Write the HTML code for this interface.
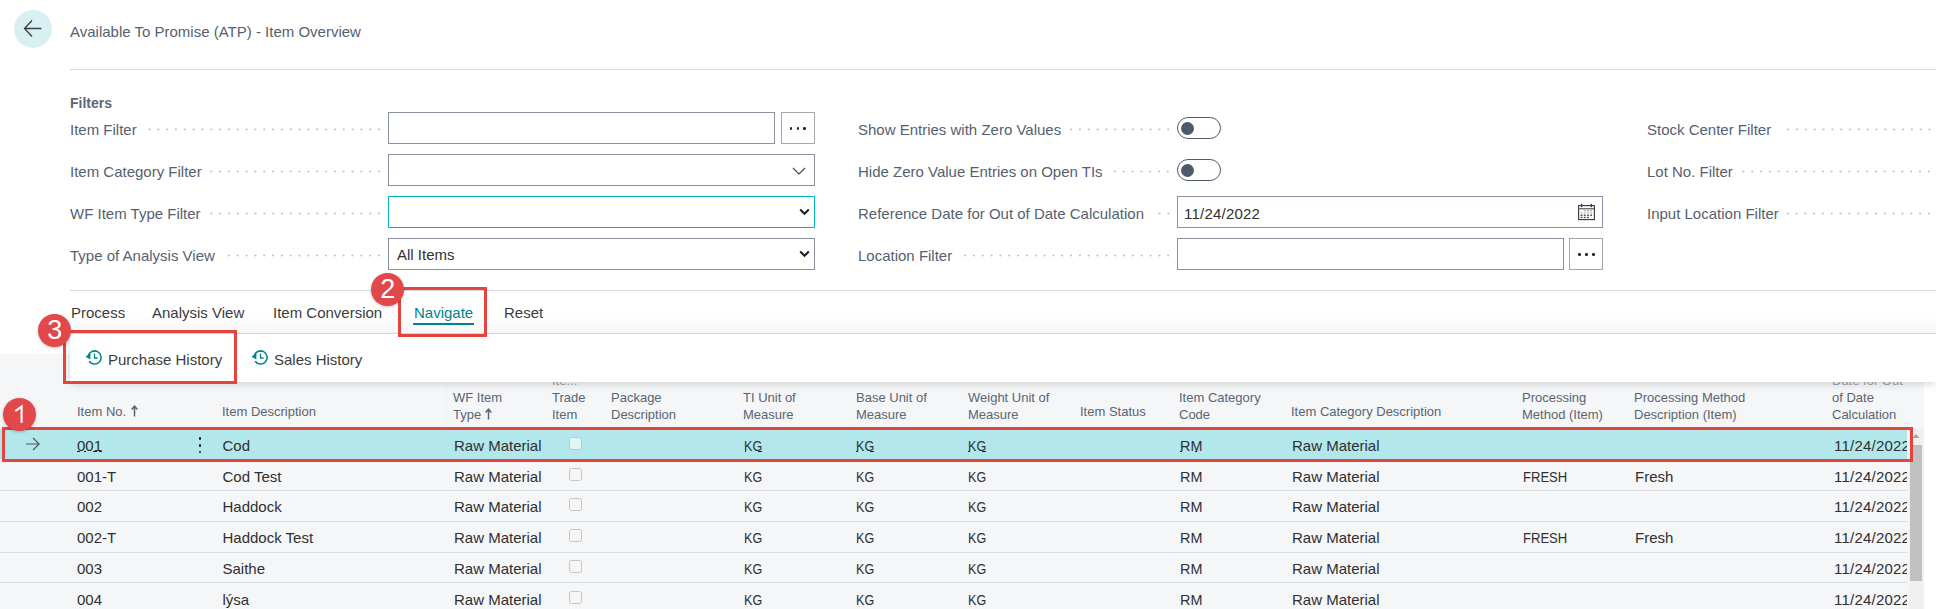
<!DOCTYPE html>
<html><head><meta charset="utf-8"><title>ATP Item Overview</title>
<style>
html,body{margin:0;padding:0;}
body{width:1936px;height:609px;overflow:hidden;position:relative;background:#fff;font-family:"Liberation Sans",sans-serif;}
.a{position:absolute;}
.t{position:absolute;white-space:nowrap;font-family:"Liberation Sans",sans-serif;}
</style></head><body>
<div class="a" style="left:14px;top:10px;width:38px;height:38px;border-radius:50%;background:#d9f0f3"></div>
<svg class="a" style="left:22px;top:18px" width="22" height="22" viewBox="0 0 22 22"><path d="M10 2.5 L2.5 10.5 L10 18.5 M2.5 10.5 L19.5 10.5" fill="none" stroke="#3b3f44" stroke-width="1.3"/></svg>
<div class="t" style="left:70px;top:24px;font-size:15px;line-height:15px;color:#56616f;font-weight:normal;">Available To Promise (ATP) - Item Overview</div>
<div class="a" style="left:70px;top:69px;width:1866px;height:1px;background:#d5d9de"></div>
<div class="t" style="left:70px;top:96px;font-size:14px;line-height:14px;color:#5d6775;font-weight:bold;">Filters</div>
<div class="t" style="left:70px;top:122px;font-size:15px;line-height:15px;color:#56616f;font-weight:normal;">Item Filter</div>
<svg class="a" style="left:144.1875px;top:127.0px" width="238" height="5" fill="#bfc3ca"><circle cx="235.06" cy="2.5" r="1.1"/><circle cx="226.23" cy="2.5" r="1.1"/><circle cx="217.40" cy="2.5" r="1.1"/><circle cx="208.57" cy="2.5" r="1.1"/><circle cx="199.74" cy="2.5" r="1.1"/><circle cx="190.91" cy="2.5" r="1.1"/><circle cx="182.08" cy="2.5" r="1.1"/><circle cx="173.25" cy="2.5" r="1.1"/><circle cx="164.42" cy="2.5" r="1.1"/><circle cx="155.59" cy="2.5" r="1.1"/><circle cx="146.76" cy="2.5" r="1.1"/><circle cx="137.93" cy="2.5" r="1.1"/><circle cx="129.10" cy="2.5" r="1.1"/><circle cx="120.27" cy="2.5" r="1.1"/><circle cx="111.44" cy="2.5" r="1.1"/><circle cx="102.61" cy="2.5" r="1.1"/><circle cx="93.78" cy="2.5" r="1.1"/><circle cx="84.95" cy="2.5" r="1.1"/><circle cx="76.12" cy="2.5" r="1.1"/><circle cx="67.29" cy="2.5" r="1.1"/><circle cx="58.46" cy="2.5" r="1.1"/><circle cx="49.63" cy="2.5" r="1.1"/><circle cx="40.80" cy="2.5" r="1.1"/><circle cx="31.97" cy="2.5" r="1.1"/><circle cx="23.14" cy="2.5" r="1.1"/><circle cx="14.31" cy="2.5" r="1.1"/><circle cx="5.48" cy="2.5" r="1.1"/></svg>
<div class="t" style="left:70px;top:164px;font-size:15px;line-height:15px;color:#56616f;font-weight:normal;">Item Category Filter</div>
<svg class="a" style="left:209.234375px;top:169.0px" width="173" height="5" fill="#bfc3ca"><circle cx="170.02" cy="2.5" r="1.1"/><circle cx="161.19" cy="2.5" r="1.1"/><circle cx="152.36" cy="2.5" r="1.1"/><circle cx="143.53" cy="2.5" r="1.1"/><circle cx="134.70" cy="2.5" r="1.1"/><circle cx="125.87" cy="2.5" r="1.1"/><circle cx="117.04" cy="2.5" r="1.1"/><circle cx="108.21" cy="2.5" r="1.1"/><circle cx="99.38" cy="2.5" r="1.1"/><circle cx="90.55" cy="2.5" r="1.1"/><circle cx="81.72" cy="2.5" r="1.1"/><circle cx="72.89" cy="2.5" r="1.1"/><circle cx="64.06" cy="2.5" r="1.1"/><circle cx="55.23" cy="2.5" r="1.1"/><circle cx="46.40" cy="2.5" r="1.1"/><circle cx="37.57" cy="2.5" r="1.1"/><circle cx="28.74" cy="2.5" r="1.1"/><circle cx="19.91" cy="2.5" r="1.1"/><circle cx="11.08" cy="2.5" r="1.1"/><circle cx="2.25" cy="2.5" r="1.1"/></svg>
<div class="t" style="left:70px;top:206px;font-size:15px;line-height:15px;color:#56616f;font-weight:normal;">WF Item Type Filter</div>
<svg class="a" style="left:208.09375px;top:211.0px" width="174" height="5" fill="#bfc3ca"><circle cx="171.16" cy="2.5" r="1.1"/><circle cx="162.33" cy="2.5" r="1.1"/><circle cx="153.50" cy="2.5" r="1.1"/><circle cx="144.67" cy="2.5" r="1.1"/><circle cx="135.84" cy="2.5" r="1.1"/><circle cx="127.01" cy="2.5" r="1.1"/><circle cx="118.18" cy="2.5" r="1.1"/><circle cx="109.35" cy="2.5" r="1.1"/><circle cx="100.52" cy="2.5" r="1.1"/><circle cx="91.69" cy="2.5" r="1.1"/><circle cx="82.86" cy="2.5" r="1.1"/><circle cx="74.03" cy="2.5" r="1.1"/><circle cx="65.20" cy="2.5" r="1.1"/><circle cx="56.37" cy="2.5" r="1.1"/><circle cx="47.54" cy="2.5" r="1.1"/><circle cx="38.71" cy="2.5" r="1.1"/><circle cx="29.88" cy="2.5" r="1.1"/><circle cx="21.05" cy="2.5" r="1.1"/><circle cx="12.22" cy="2.5" r="1.1"/><circle cx="3.39" cy="2.5" r="1.1"/></svg>
<div class="t" style="left:70px;top:248px;font-size:15px;line-height:15px;color:#56616f;font-weight:normal;">Type of Analysis View</div>
<svg class="a" style="left:222.296875px;top:253.0px" width="159" height="5" fill="#bfc3ca"><circle cx="156.95" cy="2.5" r="1.1"/><circle cx="148.12" cy="2.5" r="1.1"/><circle cx="139.29" cy="2.5" r="1.1"/><circle cx="130.46" cy="2.5" r="1.1"/><circle cx="121.63" cy="2.5" r="1.1"/><circle cx="112.80" cy="2.5" r="1.1"/><circle cx="103.97" cy="2.5" r="1.1"/><circle cx="95.14" cy="2.5" r="1.1"/><circle cx="86.31" cy="2.5" r="1.1"/><circle cx="77.48" cy="2.5" r="1.1"/><circle cx="68.65" cy="2.5" r="1.1"/><circle cx="59.82" cy="2.5" r="1.1"/><circle cx="50.99" cy="2.5" r="1.1"/><circle cx="42.16" cy="2.5" r="1.1"/><circle cx="33.33" cy="2.5" r="1.1"/><circle cx="24.50" cy="2.5" r="1.1"/><circle cx="15.67" cy="2.5" r="1.1"/><circle cx="6.84" cy="2.5" r="1.1"/></svg>
<div class="a" style="left:388px;top:112px;width:387px;height:32px;box-sizing:border-box;border:1px solid #8a939f;background:#fff"></div>
<div class="a" style="left:781px;top:112px;width:34px;height:32px;box-sizing:border-box;border:1px solid #a6a6a6;background:#fff"></div>
<div class="a" style="left:789.8px;top:127.3px;width:2.7px;height:2.7px;border-radius:50%;background:#222"></div>
<div class="a" style="left:796.5999999999999px;top:127.3px;width:2.7px;height:2.7px;border-radius:50%;background:#222"></div>
<div class="a" style="left:803.4px;top:127.3px;width:2.7px;height:2.7px;border-radius:50%;background:#222"></div>
<div class="a" style="left:388px;top:154px;width:427px;height:32px;box-sizing:border-box;border:1px solid #8a939f;background:#fff"></div>
<svg class="a" style="left:792px;top:166px" width="14" height="10" viewBox="0 0 14 10"><path d="M1 2 L7 8 L13 2" fill="none" stroke="#444" stroke-width="1.1"/></svg>
<div class="a" style="left:388px;top:196px;width:427px;height:32px;box-sizing:border-box;border:1px solid #00b7c3;background:#fff"></div>
<svg class="a" style="left:799px;top:208px" width="11" height="8" viewBox="0 0 11 8"><path d="M1.2 1.5 L5.5 5.8 L9.8 1.5" fill="none" stroke="#1e1e1e" stroke-width="2"/></svg>
<div class="a" style="left:388px;top:238px;width:427px;height:32px;box-sizing:border-box;border:1px solid #8a939f;background:#fff"></div>
<svg class="a" style="left:799px;top:250px" width="11" height="8" viewBox="0 0 11 8"><path d="M1.2 1.5 L5.5 5.8 L9.8 1.5" fill="none" stroke="#1e1e1e" stroke-width="2"/></svg>
<div class="t" style="left:397px;top:247px;font-size:15px;line-height:15px;color:#303030;font-weight:normal;">All Items</div>
<div class="t" style="left:858px;top:122px;font-size:15px;line-height:15px;color:#56616f;font-weight:normal;">Show Entries with Zero Values</div>
<svg class="a" style="left:1068.65625px;top:127.0px" width="102" height="5" fill="#bfc3ca"><circle cx="99.24" cy="2.5" r="1.1"/><circle cx="90.41" cy="2.5" r="1.1"/><circle cx="81.58" cy="2.5" r="1.1"/><circle cx="72.75" cy="2.5" r="1.1"/><circle cx="63.92" cy="2.5" r="1.1"/><circle cx="55.09" cy="2.5" r="1.1"/><circle cx="46.26" cy="2.5" r="1.1"/><circle cx="37.43" cy="2.5" r="1.1"/><circle cx="28.60" cy="2.5" r="1.1"/><circle cx="19.77" cy="2.5" r="1.1"/><circle cx="10.94" cy="2.5" r="1.1"/><circle cx="2.11" cy="2.5" r="1.1"/></svg>
<div class="t" style="left:858px;top:164px;font-size:15px;line-height:15px;color:#56616f;font-weight:normal;">Hide Zero Value Entries on Open TIs</div>
<svg class="a" style="left:1110.109375px;top:169.0px" width="60" height="5" fill="#bfc3ca"><circle cx="57.79" cy="2.5" r="1.1"/><circle cx="48.96" cy="2.5" r="1.1"/><circle cx="40.13" cy="2.5" r="1.1"/><circle cx="31.30" cy="2.5" r="1.1"/><circle cx="22.47" cy="2.5" r="1.1"/><circle cx="13.64" cy="2.5" r="1.1"/><circle cx="4.81" cy="2.5" r="1.1"/></svg>
<div class="t" style="left:858px;top:206px;font-size:15px;line-height:15px;color:#56616f;font-weight:normal;">Reference Date for Out of Date Calculation</div>
<svg class="a" style="left:1151.546875px;top:211.0px" width="19" height="5" fill="#bfc3ca"><circle cx="16.35" cy="2.5" r="1.1"/><circle cx="7.52" cy="2.5" r="1.1"/></svg>
<div class="t" style="left:858px;top:248px;font-size:15px;line-height:15px;color:#56616f;font-weight:normal;">Location Filter</div>
<svg class="a" style="left:959.71875px;top:253.0px" width="211" height="5" fill="#bfc3ca"><circle cx="208.18" cy="2.5" r="1.1"/><circle cx="199.35" cy="2.5" r="1.1"/><circle cx="190.52" cy="2.5" r="1.1"/><circle cx="181.69" cy="2.5" r="1.1"/><circle cx="172.86" cy="2.5" r="1.1"/><circle cx="164.03" cy="2.5" r="1.1"/><circle cx="155.20" cy="2.5" r="1.1"/><circle cx="146.37" cy="2.5" r="1.1"/><circle cx="137.54" cy="2.5" r="1.1"/><circle cx="128.71" cy="2.5" r="1.1"/><circle cx="119.88" cy="2.5" r="1.1"/><circle cx="111.05" cy="2.5" r="1.1"/><circle cx="102.22" cy="2.5" r="1.1"/><circle cx="93.39" cy="2.5" r="1.1"/><circle cx="84.56" cy="2.5" r="1.1"/><circle cx="75.73" cy="2.5" r="1.1"/><circle cx="66.90" cy="2.5" r="1.1"/><circle cx="58.07" cy="2.5" r="1.1"/><circle cx="49.24" cy="2.5" r="1.1"/><circle cx="40.41" cy="2.5" r="1.1"/><circle cx="31.58" cy="2.5" r="1.1"/><circle cx="22.75" cy="2.5" r="1.1"/><circle cx="13.92" cy="2.5" r="1.1"/><circle cx="5.09" cy="2.5" r="1.1"/></svg>
<div class="a" style="left:1177px;top:117px;width:44px;height:22px;box-sizing:border-box;border:1px solid #505c6d;border-radius:11px;background:#fff"></div>
<div class="a" style="left:1181px;top:122px;width:13px;height:13px;border-radius:50%;background:#4e5969"></div>
<div class="a" style="left:1177px;top:159px;width:44px;height:22px;box-sizing:border-box;border:1px solid #505c6d;border-radius:11px;background:#fff"></div>
<div class="a" style="left:1181px;top:164px;width:13px;height:13px;border-radius:50%;background:#4e5969"></div>
<div class="a" style="left:1177px;top:196px;width:426px;height:32px;box-sizing:border-box;border:1px solid #8a939f;background:#fff"></div>
<div class="t" style="left:1184px;top:206px;font-size:15px;line-height:15px;color:#303030;font-weight:normal;letter-spacing:0.22px">11/24/2022</div>
<svg class="a" style="left:1577px;top:203px" width="19" height="18" viewBox="0 0 19 18"><rect x="1.6" y="2.6" width="15.8" height="14" fill="none" stroke="#333" stroke-width="1.1"/><line x1="1.6" y1="5.7" x2="17.4" y2="5.7" stroke="#666" stroke-width="1.3"/><line x1="4.6" y1="0.8" x2="4.6" y2="4.2" stroke="#333" stroke-width="1.2"/><line x1="14.3" y1="0.8" x2="14.3" y2="4.2" stroke="#333" stroke-width="1.2"/><rect x="3.6" y="9.3" width="1.9" height="1.2" fill="#aaa"/><rect x="3.6" y="11.6" width="1.9" height="1.3" fill="#444"/><rect x="3.6" y="13.8" width="1.9" height="1.3" fill="#444"/><rect x="6.8" y="6.9" width="1.9" height="1.3" fill="#aaa"/><rect x="6.8" y="9.3" width="1.9" height="1.2" fill="#aaa"/><rect x="6.8" y="11.6" width="1.9" height="1.3" fill="#444"/><rect x="6.8" y="13.8" width="1.9" height="1.3" fill="#444"/><rect x="10.0" y="6.9" width="1.9" height="1.3" fill="#aaa"/><rect x="10.0" y="9.3" width="1.9" height="1.2" fill="#aaa"/><rect x="10.0" y="11.6" width="1.9" height="1.3" fill="#444"/><rect x="10.0" y="13.8" width="1.9" height="1.3" fill="#444"/><rect x="13.2" y="6.9" width="1.9" height="1.3" fill="#aaa"/><rect x="13.2" y="9.3" width="1.9" height="1.2" fill="#aaa"/><rect x="13.2" y="11.6" width="1.9" height="1.3" fill="#444"/></svg>
<div class="a" style="left:1177px;top:238px;width:387px;height:32px;box-sizing:border-box;border:1px solid #8a939f;background:#fff"></div>
<div class="a" style="left:1569px;top:238px;width:34px;height:32px;box-sizing:border-box;border:1px solid #a6a6a6;background:#fff"></div>
<div class="a" style="left:1578.3px;top:253.3px;width:2.7px;height:2.7px;border-radius:50%;background:#222"></div>
<div class="a" style="left:1585.1px;top:253.3px;width:2.7px;height:2.7px;border-radius:50%;background:#222"></div>
<div class="a" style="left:1591.8999999999999px;top:253.3px;width:2.7px;height:2.7px;border-radius:50%;background:#222"></div>
<div class="t" style="left:1647px;top:122px;font-size:15px;line-height:15px;color:#56616f;font-weight:normal;">Stock Center Filter</div>
<svg class="a" style="left:1778.71875px;top:127.0px" width="153" height="5" fill="#bfc3ca"><circle cx="150.48" cy="2.5" r="1.1"/><circle cx="141.65" cy="2.5" r="1.1"/><circle cx="132.82" cy="2.5" r="1.1"/><circle cx="123.99" cy="2.5" r="1.1"/><circle cx="115.16" cy="2.5" r="1.1"/><circle cx="106.33" cy="2.5" r="1.1"/><circle cx="97.50" cy="2.5" r="1.1"/><circle cx="88.67" cy="2.5" r="1.1"/><circle cx="79.84" cy="2.5" r="1.1"/><circle cx="71.01" cy="2.5" r="1.1"/><circle cx="62.18" cy="2.5" r="1.1"/><circle cx="53.35" cy="2.5" r="1.1"/><circle cx="44.52" cy="2.5" r="1.1"/><circle cx="35.69" cy="2.5" r="1.1"/><circle cx="26.86" cy="2.5" r="1.1"/><circle cx="18.03" cy="2.5" r="1.1"/><circle cx="9.20" cy="2.5" r="1.1"/></svg>
<div class="t" style="left:1647px;top:164px;font-size:15px;line-height:15px;color:#56616f;font-weight:normal;">Lot No. Filter</div>
<svg class="a" style="left:1740.375px;top:169.0px" width="191" height="5" fill="#bfc3ca"><circle cx="188.83" cy="2.5" r="1.1"/><circle cx="180.00" cy="2.5" r="1.1"/><circle cx="171.17" cy="2.5" r="1.1"/><circle cx="162.34" cy="2.5" r="1.1"/><circle cx="153.51" cy="2.5" r="1.1"/><circle cx="144.68" cy="2.5" r="1.1"/><circle cx="135.85" cy="2.5" r="1.1"/><circle cx="127.02" cy="2.5" r="1.1"/><circle cx="118.19" cy="2.5" r="1.1"/><circle cx="109.36" cy="2.5" r="1.1"/><circle cx="100.53" cy="2.5" r="1.1"/><circle cx="91.70" cy="2.5" r="1.1"/><circle cx="82.87" cy="2.5" r="1.1"/><circle cx="74.04" cy="2.5" r="1.1"/><circle cx="65.21" cy="2.5" r="1.1"/><circle cx="56.38" cy="2.5" r="1.1"/><circle cx="47.55" cy="2.5" r="1.1"/><circle cx="38.72" cy="2.5" r="1.1"/><circle cx="29.89" cy="2.5" r="1.1"/><circle cx="21.06" cy="2.5" r="1.1"/><circle cx="12.23" cy="2.5" r="1.1"/><circle cx="3.40" cy="2.5" r="1.1"/></svg>
<div class="t" style="left:1647px;top:206px;font-size:15px;line-height:15px;color:#56616f;font-weight:normal;">Input Location Filter</div>
<svg class="a" style="left:1786.265625px;top:211.0px" width="145" height="5" fill="#bfc3ca"><circle cx="142.93" cy="2.5" r="1.1"/><circle cx="134.10" cy="2.5" r="1.1"/><circle cx="125.27" cy="2.5" r="1.1"/><circle cx="116.44" cy="2.5" r="1.1"/><circle cx="107.61" cy="2.5" r="1.1"/><circle cx="98.78" cy="2.5" r="1.1"/><circle cx="89.95" cy="2.5" r="1.1"/><circle cx="81.12" cy="2.5" r="1.1"/><circle cx="72.29" cy="2.5" r="1.1"/><circle cx="63.46" cy="2.5" r="1.1"/><circle cx="54.63" cy="2.5" r="1.1"/><circle cx="45.80" cy="2.5" r="1.1"/><circle cx="36.97" cy="2.5" r="1.1"/><circle cx="28.14" cy="2.5" r="1.1"/><circle cx="19.31" cy="2.5" r="1.1"/><circle cx="10.48" cy="2.5" r="1.1"/><circle cx="1.65" cy="2.5" r="1.1"/></svg>
<div class="a" style="left:70px;top:290px;width:1866px;height:1px;background:#d5d9de"></div>
<div class="a" style="left:70px;top:316px;width:1866px;height:17px;background:linear-gradient(rgba(240,241,243,0),rgba(240,241,243,0.6))"></div>
<div class="a" style="left:70px;top:333px;width:1866px;height:1px;background:#d7dade"></div>
<div class="t" style="left:71px;top:305px;font-size:15px;line-height:15px;color:#3c3c3c;font-weight:normal;">Process</div>
<div class="t" style="left:152px;top:305px;font-size:15px;line-height:15px;color:#3c3c3c;font-weight:normal;">Analysis View</div>
<div class="t" style="left:273px;top:305px;font-size:15px;line-height:15px;color:#3c3c3c;font-weight:normal;">Item Conversion</div>
<div class="t" style="left:504px;top:305px;font-size:15px;line-height:15px;color:#3c3c3c;font-weight:normal;">Reset</div>
<div class="t" style="left:414px;top:305px;font-size:15px;line-height:15px;color:#008489;font-weight:normal;">Navigate</div>
<div class="a" style="left:413px;top:323px;width:61px;height:2px;background:#00838a"></div>
<div class="a" style="left:0px;top:354px;width:1924px;height:255px;background:#f5f6f8"></div>
<div class="a" style="left:446px;top:383px;width:1px;height:46px;background:#eef0f2"></div>
<div class="a" style="left:1924px;top:354px;width:12px;height:255px;background:#fff"></div>
<div class="t" style="left:77px;top:405px;font-size:13px;line-height:13px;color:#5a6473;font-weight:normal;">Item No.</div>
<svg class="a" style="left:131px;top:404.5px" width="7" height="12" viewBox="0 0 7 12"><path d="M3.5 1.5 L3.5 11.5 M0.6 4.4 L3.5 1.2 L6.4 4.4" fill="none" stroke="#5a6473" stroke-width="1.5"/></svg>
<div class="t" style="left:222px;top:405px;font-size:13px;line-height:13px;color:#5a6473;font-weight:normal;">Item Description</div>
<div class="t" style="left:453px;top:391px;font-size:13px;line-height:13px;color:#5a6473;font-weight:normal;">WF Item</div>
<div class="t" style="left:453px;top:408px;font-size:13px;line-height:13px;color:#5a6473;font-weight:normal;">Type</div>
<svg class="a" style="left:485px;top:407.5px" width="7" height="12" viewBox="0 0 7 12"><path d="M3.5 1.5 L3.5 11.5 M0.6 4.4 L3.5 1.2 L6.4 4.4" fill="none" stroke="#5a6473" stroke-width="1.5"/></svg>
<div class="t" style="left:552px;top:374px;font-size:13px;line-height:13px;color:#9aa1ab;font-weight:normal;">Ite...</div>
<div class="t" style="left:552px;top:391px;font-size:13px;line-height:13px;color:#5a6473;font-weight:normal;">Trade</div>
<div class="t" style="left:552px;top:408px;font-size:13px;line-height:13px;color:#5a6473;font-weight:normal;">Item</div>
<div class="t" style="left:611px;top:391px;font-size:13px;line-height:13px;color:#5a6473;font-weight:normal;">Package</div>
<div class="t" style="left:611px;top:408px;font-size:13px;line-height:13px;color:#5a6473;font-weight:normal;">Description</div>
<div class="t" style="left:743px;top:391px;font-size:13px;line-height:13px;color:#5a6473;font-weight:normal;">TI Unit of</div>
<div class="t" style="left:743px;top:408px;font-size:13px;line-height:13px;color:#5a6473;font-weight:normal;">Measure</div>
<div class="t" style="left:856px;top:391px;font-size:13px;line-height:13px;color:#5a6473;font-weight:normal;">Base Unit of</div>
<div class="t" style="left:856px;top:408px;font-size:13px;line-height:13px;color:#5a6473;font-weight:normal;">Measure</div>
<div class="t" style="left:968px;top:391px;font-size:13px;line-height:13px;color:#5a6473;font-weight:normal;">Weight Unit of</div>
<div class="t" style="left:968px;top:408px;font-size:13px;line-height:13px;color:#5a6473;font-weight:normal;">Measure</div>
<div class="t" style="left:1080px;top:405px;font-size:13px;line-height:13px;color:#5a6473;font-weight:normal;">Item Status</div>
<div class="t" style="left:1179px;top:391px;font-size:13px;line-height:13px;color:#5a6473;font-weight:normal;">Item Category</div>
<div class="t" style="left:1179px;top:408px;font-size:13px;line-height:13px;color:#5a6473;font-weight:normal;">Code</div>
<div class="t" style="left:1291px;top:405px;font-size:13px;line-height:13px;color:#5a6473;font-weight:normal;">Item Category Description</div>
<div class="t" style="left:1522px;top:391px;font-size:13px;line-height:13px;color:#5a6473;font-weight:normal;">Processing</div>
<div class="t" style="left:1522px;top:408px;font-size:13px;line-height:13px;color:#5a6473;font-weight:normal;">Method (Item)</div>
<div class="t" style="left:1634px;top:391px;font-size:13px;line-height:13px;color:#5a6473;font-weight:normal;">Processing Method</div>
<div class="t" style="left:1634px;top:408px;font-size:13px;line-height:13px;color:#5a6473;font-weight:normal;">Description (Item)</div>
<div class="t" style="left:1832px;top:374px;font-size:13px;line-height:13px;color:#9aa1ab;font-weight:normal;">Date for Out</div>
<div class="t" style="left:1832px;top:391px;font-size:13px;line-height:13px;color:#5a6473;font-weight:normal;">of Date</div>
<div class="t" style="left:1832px;top:408px;font-size:13px;line-height:13px;color:#5a6473;font-weight:normal;">Calculation</div>
<div class="a" style="left:0px;top:429px;width:1907px;height:30px;background:#b2e7eb"></div>
<div class="t" style="left:77px;top:438px;font-size:15px;line-height:15px;color:#303030;font-weight:normal;">001</div>
<div class="t" style="left:222.5px;top:438px;font-size:15px;line-height:15px;color:#303030;font-weight:normal;">Cod</div>
<div class="t" style="left:454px;top:438px;font-size:15px;line-height:15px;color:#303030;font-weight:normal;">Raw Material</div>
<div class="a" style="left:569px;top:437px;width:13px;height:13px;box-sizing:border-box;border:1px solid #c6c6c6;border-radius:2.5px;background:#e3f4f6"></div>
<div class="t" style="left:744px;top:438px;font-size:15px;line-height:15px;color:#303030;font-weight:normal;transform:scaleX(0.84);transform-origin:0 0">KG</div>
<div class="t" style="left:856px;top:438px;font-size:15px;line-height:15px;color:#303030;font-weight:normal;transform:scaleX(0.84);transform-origin:0 0">KG</div>
<div class="t" style="left:968px;top:438px;font-size:15px;line-height:15px;color:#303030;font-weight:normal;transform:scaleX(0.84);transform-origin:0 0">KG</div>
<div class="t" style="left:1180px;top:438px;font-size:15px;line-height:15px;color:#303030;font-weight:normal;transform:scaleX(0.96);transform-origin:0 0">RM</div>
<div class="t" style="left:1292px;top:438px;font-size:15px;line-height:15px;color:#303030;font-weight:normal;">Raw Material</div>
<div class="t" style="left:1834px;top:438px;font-size:15px;line-height:15px;color:#303030;font-weight:normal;letter-spacing:0.22px;width:73px;overflow:hidden">11/24/2022</div>
<div class="t" style="left:77px;top:469px;font-size:15px;line-height:15px;color:#303030;font-weight:normal;">001-T</div>
<div class="t" style="left:222.5px;top:469px;font-size:15px;line-height:15px;color:#303030;font-weight:normal;">Cod Test</div>
<div class="t" style="left:454px;top:469px;font-size:15px;line-height:15px;color:#303030;font-weight:normal;">Raw Material</div>
<div class="a" style="left:569px;top:468px;width:13px;height:13px;box-sizing:border-box;border:1px solid #c6c6c6;border-radius:2.5px;background:#f6f6f6"></div>
<div class="t" style="left:744px;top:469px;font-size:15px;line-height:15px;color:#303030;font-weight:normal;transform:scaleX(0.84);transform-origin:0 0">KG</div>
<div class="t" style="left:856px;top:469px;font-size:15px;line-height:15px;color:#303030;font-weight:normal;transform:scaleX(0.84);transform-origin:0 0">KG</div>
<div class="t" style="left:968px;top:469px;font-size:15px;line-height:15px;color:#303030;font-weight:normal;transform:scaleX(0.84);transform-origin:0 0">KG</div>
<div class="t" style="left:1180px;top:469px;font-size:15px;line-height:15px;color:#303030;font-weight:normal;transform:scaleX(0.96);transform-origin:0 0">RM</div>
<div class="t" style="left:1292px;top:469px;font-size:15px;line-height:15px;color:#303030;font-weight:normal;">Raw Material</div>
<div class="t" style="left:1523px;top:469px;font-size:15px;line-height:15px;color:#303030;font-weight:normal;transform:scaleX(0.87);transform-origin:0 0">FRESH</div>
<div class="t" style="left:1635px;top:469px;font-size:15px;line-height:15px;color:#303030;font-weight:normal;">Fresh</div>
<div class="t" style="left:1834px;top:469px;font-size:15px;line-height:15px;color:#303030;font-weight:normal;letter-spacing:0.22px;width:73px;overflow:hidden">11/24/2022</div>
<div class="t" style="left:77px;top:499px;font-size:15px;line-height:15px;color:#303030;font-weight:normal;">002</div>
<div class="t" style="left:222.5px;top:499px;font-size:15px;line-height:15px;color:#303030;font-weight:normal;">Haddock</div>
<div class="t" style="left:454px;top:499px;font-size:15px;line-height:15px;color:#303030;font-weight:normal;">Raw Material</div>
<div class="a" style="left:569px;top:498px;width:13px;height:13px;box-sizing:border-box;border:1px solid #c6c6c6;border-radius:2.5px;background:#f6f6f6"></div>
<div class="t" style="left:744px;top:499px;font-size:15px;line-height:15px;color:#303030;font-weight:normal;transform:scaleX(0.84);transform-origin:0 0">KG</div>
<div class="t" style="left:856px;top:499px;font-size:15px;line-height:15px;color:#303030;font-weight:normal;transform:scaleX(0.84);transform-origin:0 0">KG</div>
<div class="t" style="left:968px;top:499px;font-size:15px;line-height:15px;color:#303030;font-weight:normal;transform:scaleX(0.84);transform-origin:0 0">KG</div>
<div class="t" style="left:1180px;top:499px;font-size:15px;line-height:15px;color:#303030;font-weight:normal;transform:scaleX(0.96);transform-origin:0 0">RM</div>
<div class="t" style="left:1292px;top:499px;font-size:15px;line-height:15px;color:#303030;font-weight:normal;">Raw Material</div>
<div class="t" style="left:1834px;top:499px;font-size:15px;line-height:15px;color:#303030;font-weight:normal;letter-spacing:0.22px;width:73px;overflow:hidden">11/24/2022</div>
<div class="t" style="left:77px;top:530px;font-size:15px;line-height:15px;color:#303030;font-weight:normal;">002-T</div>
<div class="t" style="left:222.5px;top:530px;font-size:15px;line-height:15px;color:#303030;font-weight:normal;">Haddock Test</div>
<div class="t" style="left:454px;top:530px;font-size:15px;line-height:15px;color:#303030;font-weight:normal;">Raw Material</div>
<div class="a" style="left:569px;top:529px;width:13px;height:13px;box-sizing:border-box;border:1px solid #c6c6c6;border-radius:2.5px;background:#f6f6f6"></div>
<div class="t" style="left:744px;top:530px;font-size:15px;line-height:15px;color:#303030;font-weight:normal;transform:scaleX(0.84);transform-origin:0 0">KG</div>
<div class="t" style="left:856px;top:530px;font-size:15px;line-height:15px;color:#303030;font-weight:normal;transform:scaleX(0.84);transform-origin:0 0">KG</div>
<div class="t" style="left:968px;top:530px;font-size:15px;line-height:15px;color:#303030;font-weight:normal;transform:scaleX(0.84);transform-origin:0 0">KG</div>
<div class="t" style="left:1180px;top:530px;font-size:15px;line-height:15px;color:#303030;font-weight:normal;transform:scaleX(0.96);transform-origin:0 0">RM</div>
<div class="t" style="left:1292px;top:530px;font-size:15px;line-height:15px;color:#303030;font-weight:normal;">Raw Material</div>
<div class="t" style="left:1523px;top:530px;font-size:15px;line-height:15px;color:#303030;font-weight:normal;transform:scaleX(0.87);transform-origin:0 0">FRESH</div>
<div class="t" style="left:1635px;top:530px;font-size:15px;line-height:15px;color:#303030;font-weight:normal;">Fresh</div>
<div class="t" style="left:1834px;top:530px;font-size:15px;line-height:15px;color:#303030;font-weight:normal;letter-spacing:0.22px;width:73px;overflow:hidden">11/24/2022</div>
<div class="t" style="left:77px;top:561px;font-size:15px;line-height:15px;color:#303030;font-weight:normal;">003</div>
<div class="t" style="left:222.5px;top:561px;font-size:15px;line-height:15px;color:#303030;font-weight:normal;">Saithe</div>
<div class="t" style="left:454px;top:561px;font-size:15px;line-height:15px;color:#303030;font-weight:normal;">Raw Material</div>
<div class="a" style="left:569px;top:560px;width:13px;height:13px;box-sizing:border-box;border:1px solid #c6c6c6;border-radius:2.5px;background:#f6f6f6"></div>
<div class="t" style="left:744px;top:561px;font-size:15px;line-height:15px;color:#303030;font-weight:normal;transform:scaleX(0.84);transform-origin:0 0">KG</div>
<div class="t" style="left:856px;top:561px;font-size:15px;line-height:15px;color:#303030;font-weight:normal;transform:scaleX(0.84);transform-origin:0 0">KG</div>
<div class="t" style="left:968px;top:561px;font-size:15px;line-height:15px;color:#303030;font-weight:normal;transform:scaleX(0.84);transform-origin:0 0">KG</div>
<div class="t" style="left:1180px;top:561px;font-size:15px;line-height:15px;color:#303030;font-weight:normal;transform:scaleX(0.96);transform-origin:0 0">RM</div>
<div class="t" style="left:1292px;top:561px;font-size:15px;line-height:15px;color:#303030;font-weight:normal;">Raw Material</div>
<div class="t" style="left:1834px;top:561px;font-size:15px;line-height:15px;color:#303030;font-weight:normal;letter-spacing:0.22px;width:73px;overflow:hidden">11/24/2022</div>
<div class="t" style="left:77px;top:592px;font-size:15px;line-height:15px;color:#303030;font-weight:normal;">004</div>
<div class="t" style="left:222.5px;top:592px;font-size:15px;line-height:15px;color:#303030;font-weight:normal;">lýsa</div>
<div class="t" style="left:454px;top:592px;font-size:15px;line-height:15px;color:#303030;font-weight:normal;">Raw Material</div>
<div class="a" style="left:569px;top:591px;width:13px;height:13px;box-sizing:border-box;border:1px solid #c6c6c6;border-radius:2.5px;background:#f6f6f6"></div>
<div class="t" style="left:744px;top:592px;font-size:15px;line-height:15px;color:#303030;font-weight:normal;transform:scaleX(0.84);transform-origin:0 0">KG</div>
<div class="t" style="left:856px;top:592px;font-size:15px;line-height:15px;color:#303030;font-weight:normal;transform:scaleX(0.84);transform-origin:0 0">KG</div>
<div class="t" style="left:968px;top:592px;font-size:15px;line-height:15px;color:#303030;font-weight:normal;transform:scaleX(0.84);transform-origin:0 0">KG</div>
<div class="t" style="left:1180px;top:592px;font-size:15px;line-height:15px;color:#303030;font-weight:normal;transform:scaleX(0.96);transform-origin:0 0">RM</div>
<div class="t" style="left:1292px;top:592px;font-size:15px;line-height:15px;color:#303030;font-weight:normal;">Raw Material</div>
<div class="t" style="left:1834px;top:592px;font-size:15px;line-height:15px;color:#303030;font-weight:normal;letter-spacing:0.22px;width:73px;overflow:hidden">11/24/2022</div>
<div class="a" style="left:0px;top:490px;width:1907px;height:1px;background:#d9dbdf"></div>
<div class="a" style="left:0px;top:521px;width:1907px;height:1px;background:#d9dbdf"></div>
<div class="a" style="left:0px;top:552px;width:1907px;height:1px;background:#d9dbdf"></div>
<div class="a" style="left:0px;top:582px;width:1907px;height:1px;background:#d9dbdf"></div>
<svg class="a" style="left:25px;top:437px" width="16" height="14" viewBox="0 0 16 14"><path d="M8 1 L14.2 7 L8 13 M1 7 L14.2 7" fill="none" stroke="#505459" stroke-width="1.1"/></svg>
<div class="a" style="left:198.5px;top:437.3px;width:2.6px;height:2.6px;border-radius:50%;background:#1a1a1a"></div>
<div class="a" style="left:198.5px;top:444.0px;width:2.6px;height:2.6px;border-radius:50%;background:#1a1a1a"></div>
<div class="a" style="left:198.5px;top:450.7px;width:2.6px;height:2.6px;border-radius:50%;background:#1a1a1a"></div>
<div class="a" style="left:77px;top:451px;width:2.5px;height:1.2px;background:#222"></div>
<div class="a" style="left:84px;top:451px;width:1.7000000000000028px;height:1.2px;background:#222"></div>
<div class="a" style="left:93.4px;top:451px;width:3.3999999999999915px;height:1.2px;background:#222"></div>
<div class="a" style="left:99.2px;top:451px;width:2.799999999999997px;height:1.2px;background:#222"></div>
<div class="a" style="left:744.5px;top:451px;width:1.5px;height:1.2px;background:#222"></div>
<div class="a" style="left:758px;top:451px;width:4px;height:1.2px;background:#222"></div>
<div class="a" style="left:856px;top:451px;width:1.5px;height:1.2px;background:#222"></div>
<div class="a" style="left:870px;top:451px;width:4px;height:1.2px;background:#222"></div>
<div class="a" style="left:968px;top:451px;width:1.5px;height:1.2px;background:#222"></div>
<div class="a" style="left:982px;top:451px;width:4px;height:1.2px;background:#222"></div>
<div class="a" style="left:1180px;top:451px;width:1.5px;height:1.2px;background:#222"></div>
<div class="a" style="left:1195px;top:451px;width:2px;height:1.2px;background:#222"></div>
<div class="a" style="left:1909px;top:429px;width:15px;height:180px;background:#f0f0f0"></div>
<svg class="a" style="left:1911px;top:432px" width="10" height="8" viewBox="0 0 10 8"><path d="M1.5 6 L5 2 L8.5 6 Z" fill="#a3a3a3"/></svg>
<div class="a" style="left:1910px;top:445px;width:12px;height:136px;background:#c1c1c1"></div>
<div class="a" style="left:70px;top:334px;width:1866px;height:48px;background:#fff;box-shadow:0 3px 7px rgba(0,0,0,0.13)"></div>
<svg class="a" style="left:85px;top:349px" width="18" height="17" viewBox="0 0 18 17"><path d="M3.13 6.79 A6.6 6.6 0 1 1 4.09 12.29" fill="none" stroke="#00838a" stroke-width="1.5"/><path d="M0.4 7.7 L5.4 4.6 L5.4 10.4 Z" fill="#00838a"/><path d="M9.5 4.4 L9.5 9 L12.6 9" fill="none" stroke="#00838a" stroke-width="1.3"/></svg>
<div class="t" style="left:108px;top:352px;font-size:15px;line-height:15px;color:#3c3c3c;font-weight:normal;">Purchase History</div>
<svg class="a" style="left:251px;top:349px" width="18" height="17" viewBox="0 0 18 17"><path d="M3.13 6.79 A6.6 6.6 0 1 1 4.09 12.29" fill="none" stroke="#00838a" stroke-width="1.5"/><path d="M0.4 7.7 L5.4 4.6 L5.4 10.4 Z" fill="#00838a"/><path d="M9.5 4.4 L9.5 9 L12.6 9" fill="none" stroke="#00838a" stroke-width="1.3"/></svg>
<div class="t" style="left:274px;top:352px;font-size:15px;line-height:15px;color:#3c3c3c;font-weight:normal;">Sales History</div>
<div class="a" style="left:63px;top:330px;width:174px;height:54px;box-sizing:border-box;border:3px solid #e5443e"></div>
<div class="a" style="left:398px;top:287px;width:89px;height:50px;box-sizing:border-box;border:3px solid #e5443e"></div>
<div class="a" style="left:2px;top:427px;width:1911px;height:35px;box-sizing:border-box;border:3px solid #e5443e"></div>
<div class="a" style="left:3.0px;top:397.9px;width:33px;height:33px;border-radius:50%;background:#e2474a;box-shadow:0 1px 3px rgba(0,0,0,0.25)"></div>
<svg class="a" style="left:3.0px;top:397.9px" width="33" height="33" viewBox="0 0 33 33"><path d="M12.3 13.2 L18.6 8.6 L18.6 24.8" fill="none" stroke="#fff" stroke-width="2.1" stroke-linejoin="miter"/></svg>
<div class="a" style="left:371.0px;top:273.0px;width:33px;height:33px;border-radius:50%;background:#e2474a;box-shadow:0 1px 3px rgba(0,0,0,0.25)"></div>
<div class="t" style="left:380.2px;top:276px;font-size:27px;line-height:27px;color:#fff;font-weight:normal;">2</div>
<div class="a" style="left:38.0px;top:314.0px;width:33px;height:33px;border-radius:50%;background:#e2474a;box-shadow:0 1px 3px rgba(0,0,0,0.25)"></div>
<div class="t" style="left:47.2px;top:317px;font-size:27px;line-height:27px;color:#fff;font-weight:normal;">3</div>
</body></html>
